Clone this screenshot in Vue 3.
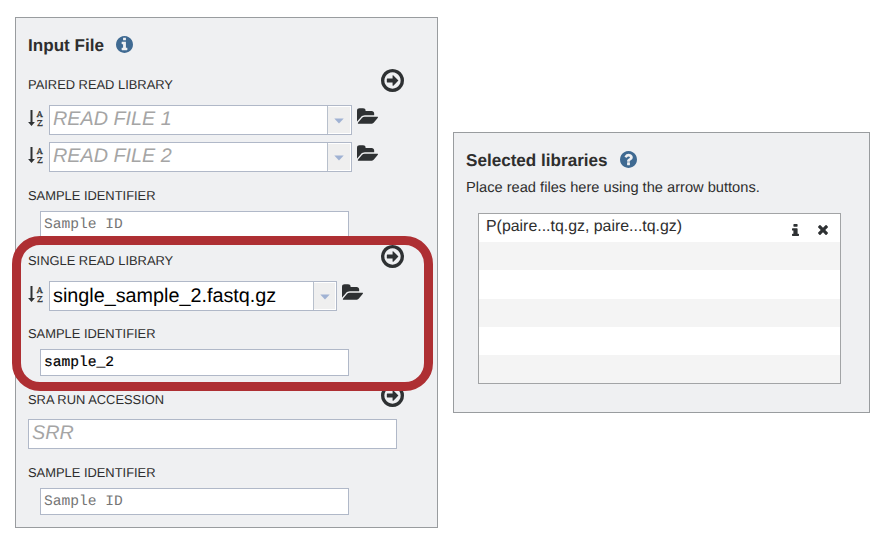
<script setup>
const circle = 'M1664 896q0 209-103 385.5t-279.5 279.5-385.5 103-385.5-103-279.5-279.5-103-385.5 103-385.5 279.5-279.5 385.5-103 385.5 103 279.5 279.5 103 385.5z'
const icons = {
  info: 'M1152 1376v-160q0-14-9-23t-23-9h-96v-512q0-14-9-23t-23-9h-320q-14 0-23 9t-9 23v160q0 14 9 23t23 9h96v320h-96q-14 0-23 9t-9 23v160q0 14 9 23t23 9h448q14 0 23-9t9-23zm-128-896v-160q0-14-9-23t-23-9h-192q-14 0-23 9t-9 23v160q0 14 9 23t23 9h192q14 0 23-9t9-23z' + circle,
  question: 'M1024 1376v-192q0-14-9-23t-23-9h-192q-14 0-23 9t-9 23v192q0 14 9 23t23 9h192q14 0 23-9t9-23zm256-672q0-88-55.5-163t-138.5-116-170-41q-243 0-371 213-15 24 8 42l132 100q7 6 19 6 16 0 25-12 53-68 86-92 34-24 86-24 48 0 85.5 26t37.5 59q0 38-20 61t-68 45q-63 28-115.5 86.5t-52.5 125.5v36q0 14 9 23t23 9h192q14 0 23-9t9-23q0-19 21.5-49.5t54.5-49.5q32-18 49-28.5t46-35 44.5-48 28-60.5 12.5-81z' + circle,
  arrow: 'M1285 896q0 13-9 23l-320 320q-9 9-23 9-13 0-22.5-9.5t-9.5-22.5v-192h-352q-13 0-22.5-9.5t-9.5-22.5v-192q0-13 9.5-22.5t22.5-9.5h352v-192q0-14 9-23t23-9q12 0 24 10l319 319q9 9 9 23zm155 0q0-148-73-273t-198-198-273-73-273 73-198 198-73 273 73 273 198 198 273 73 273-73 198-198 73-273z' + circle,
  folder: 'M1879 952q0 31-31 66l-336 396q-43 51-120.5 86.5t-143.5 35.5h-1088q-34 0-60.5-13t-26.5-43q0-31 31-66l336-396q43-51 120.5-86.5t143.5-35.5h1088q34 0 60.5 13t26.5 43zm-343-344v160h-832q-94 0-197 47.5t-164 119.5l-337 396-5 6q0-4-.5-12.5t-.5-12.5v-960q0-92 66-158t158-66h320q92 0 158 66t66 158v32h544q92 0 158 66t66 158z',
  infoSmall: 'M1216 1344v128q0 26-19 45t-45 19h-512q-26 0-45-19t-19-45v-128q0-26 19-45t45-19h64v-384h-64q-26 0-45-19t-19-45v-128q0-26 19-45t45-19h384q26 0 45 19t19 45v576h64q26 0 45 19t19 45zm-128-1152v192q0 26-19 45t-45 19h-256q-26 0-45-19t-19-45v-192q0-26 19-45t45-19h256q26 0 45 19t19 45z',
  close: 'M1490 1322q0 40-28 68l-136 136q-28 28-68 28t-68-28l-294-294-294 294q-28 28-68 28t-68-28l-136-136q-28-28-28-68t28-68l294-294-294-294q-28-28-28-68t28-68l136-136q28-28 68-28t68 28l294 294 294-294q28-28 68-28t68 28l136 136q28 28 28 68t-28 68l-294 294 294 294q28 28 28 68z',
}

const sections = [
  {
    key: 'paired',
    title: 'PAIRED READ LIBRARY',
    files: [{ text: 'READ FILE 1', empty: true }, { text: 'READ FILE 2', empty: true }],
    sample: { text: 'Sample ID', empty: true },
  },
  {
    key: 'single',
    title: 'SINGLE READ LIBRARY',
    files: [{ text: 'single_sample_2.fastq.gz', empty: false }],
    sample: { text: 'sample_2', empty: false },
  },
  {
    key: 'sra',
    title: 'SRA RUN ACCESSION',
    files: [],
    accession: 'SRR',
    sample: { text: 'Sample ID', empty: true },
  },
]

const libraries = ['P(paire...tq.gz, paire...tq.gz)', '', '', '', '', '']
</script>

<template>
  <main class="page">
    <section class="panel input-panel">
      <h2 class="title">
        <span class="input-title">Input File</span>
        <svg class="badge" viewBox="128 128 1536 1536"><path :d="icons.info" /></svg>
      </h2>

      <div v-for="s in sections" :key="s.key" class="section" :class="s.key">
        <div class="head">
          <span class="label">{{ s.title }}</span>
          <svg class="add" viewBox="128 128 1536 1536"><path :d="icons.arrow" /></svg>
        </div>

        <div v-if="s.files.length" class="files">
          <div v-for="f in s.files" :key="f.text" class="file-row">
            <svg class="sort" viewBox="0 0 16 18">
              <path d="M2.5 1h2v12h2.4L3.5 17 0.1 13h2.4z" />
              <text x="8.7" y="7.6">A</text>
              <text x="8.9" y="16.9">Z</text>
            </svg>
            <div class="combo">
              <span class="value" :class="{ empty: f.empty }">{{ f.text }}</span>
              <span class="drop"><svg viewBox="0 0 10 6"><path d="M0.3 0.5h9.4L5 5.6z" /></svg></span>
            </div>
            <svg class="folder" viewBox="0 128 1879 1408"><path :d="icons.folder" /></svg>
          </div>
        </div>
        <div v-else class="accession"><span class="value empty">{{ s.accession }}</span></div>

        <div class="label sample-label">SAMPLE IDENTIFIER</div>
        <div class="sample" :class="{ empty: s.sample.empty }">{{ s.sample.text }}</div>
      </div>
      <div class="highlight"></div>
    </section>

    <section class="panel selected-panel">
      <h2 class="title">
        <span class="selected-title">Selected libraries</span>
        <svg class="badge" viewBox="128 128 1536 1536"><path :d="icons.question" /></svg>
      </h2>
      <p class="hint">Place read files here using the arrow buttons.</p>
      <div class="list">
        <div v-for="(lib, i) in libraries" :key="i" class="item">
          <template v-if="lib">
            <span class="name">{{ lib }}</span>
            <svg class="item-info" viewBox="576 128 640 1408" preserveAspectRatio="none"><path :d="icons.infoSmall" /></svg>
            <svg class="item-close" viewBox="302 366 1188 1188"><path :d="icons.close" /></svg>
          </template>
        </div>
      </div>
    </section>
  </main>
</template>

<style>
body {
  margin: 0;
  background: #fff;
}
</style>

<style scoped>
* {
  box-sizing: border-box;
}
.page {
  display: flex;
  align-items: flex-start;
  gap: 15px;
  width: 880px;
  height: 538px;
  padding: 17px 0 0 15px;
  font-family: 'Liberation Sans', Arial, sans-serif;
  color: #2e2e2e;
  text-rendering: geometricPrecision;
}
svg {
  display: block;
  flex: none;
  fill: #2e3133;
}
.panel {
  position: relative;
  flex: none;
  background: #eff0f2;
  border: 1px solid #999c9f;
}
.input-panel {
  width: 423px;
  height: 511px;
  padding: 12px 0 0 12px;
}
.selected-panel {
  width: 417px;
  height: 281px;
  margin-top: 115px;
  padding: 12px 0 0 12px;
}
.title {
  display: flex;
  align-items: center;
  gap: 12px;
  height: 32px;
  margin: 0;
  font-size: 17.1px;
  line-height: 32px;
  white-space: nowrap;
}
.badge {
  width: 17px;
  height: 17px;
  margin-bottom: 3px;
  fill: #3f6a92;
}
.section.paired {
  margin-top: 7px;
}
.section.single {
  margin-top: 7px;
}
.section.sra {
  margin-top: 8px;
}
.head {
  display: flex;
  justify-content: space-between;
  width: 376px;
  height: 23px;
}
.label {
  font-size: 12.9px;
  line-height: 16px;
  white-space: nowrap;
}
.head .label {
  padding-top: 8px;
}
.add {
  width: 23px;
  height: 23px;
}
.files {
  display: flex;
  flex-direction: column;
  gap: 7px;
  margin-top: 13px;
}
.file-row {
  display: flex;
  height: 30px;
}
.sort {
  width: 16px;
  height: 18px;
  margin: 4px 5px 0 0;
}
.sort text {
  font: 8.2px 'DejaVu Serif', serif;
  stroke: #2e3133;
  stroke-width: 0.3px;
}
.combo {
  display: flex;
  width: 303px;
  background: #fff;
  border: 1px solid #b0b8c8;
}
.single .combo {
  width: 288px;
}
.value {
  flex: 1;
  padding-left: 3px;
  font-size: 19.8px;
  line-height: 28px;
  color: #000;
  white-space: nowrap;
}
.value.empty {
  line-height: 26px;
  font-style: italic;
  color: #a5a5a5;
}
.drop {
  display: flex;
  align-items: center;
  justify-content: center;
  width: 23px;
  background: #efefef;
  border: 1px solid #fff;
  border-left: 0;
  box-shadow: -1px 0 0 #b8c0cc;
}
.single .drop {
  width: 22px;
}
.drop svg {
  width: 10px;
  height: 6px;
  margin-top: 1px;
  fill: #a0b2d3;
}
.folder {
  width: 21px;
  height: 16px;
  margin: 3px 0 0 5px;
}
.accession {
  width: 369px;
  height: 30px;
  margin-top: 12px;
  background: #fff;
  border: 1px solid #b0b8c8;
}
.accession .value {
  display: block;
}
.sample-label {
  padding-top: 1px;
  margin-top: 15px;
}
.single .sample-label {
  margin-top: 14px;
}
.sample {
  width: 309px;
  height: 27px;
  margin: 7px 0 0 12px;
  padding: 1px 0 0 3px;
  background: #fff;
  border: 1px solid #b0b8c8;
  font: 14.6px/25px 'Liberation Mono', monospace;
  color: #000;
  -webkit-text-stroke: 0.2px currentColor;
}
.sample.empty {
  color: #757575;
  -webkit-text-stroke: 0;
}
.highlight {
  position: absolute;
  left: -4px;
  top: 218px;
  width: 421px;
  height: 155px;
  border: 9px solid #ae2f33;
  border-radius: 28px;
}
.hint {
  margin: 1px 0 0;
  font-size: 14.65px;
  line-height: 20px;
  white-space: nowrap;
}
.list {
  width: 363px;
  height: 171px;
  margin: 15px 0 0 12px;
  background: #fff;
  border: 1px solid #a2a4a6;
}
.item {
  display: flex;
  height: 28.2px;
  padding-left: 7px;
}
.item:nth-child(even) {
  background: #f4f4f4;
}
.name {
  width: 306px;
  font-size: 15.9px;
  line-height: 25px;
  white-space: nowrap;
}
.item-info {
  width: 7px;
  height: 12px;
  margin-top: 10px;
}
.item-close {
  width: 10px;
  height: 10px;
  margin: 11px 0 0 19px;
}
</style>
